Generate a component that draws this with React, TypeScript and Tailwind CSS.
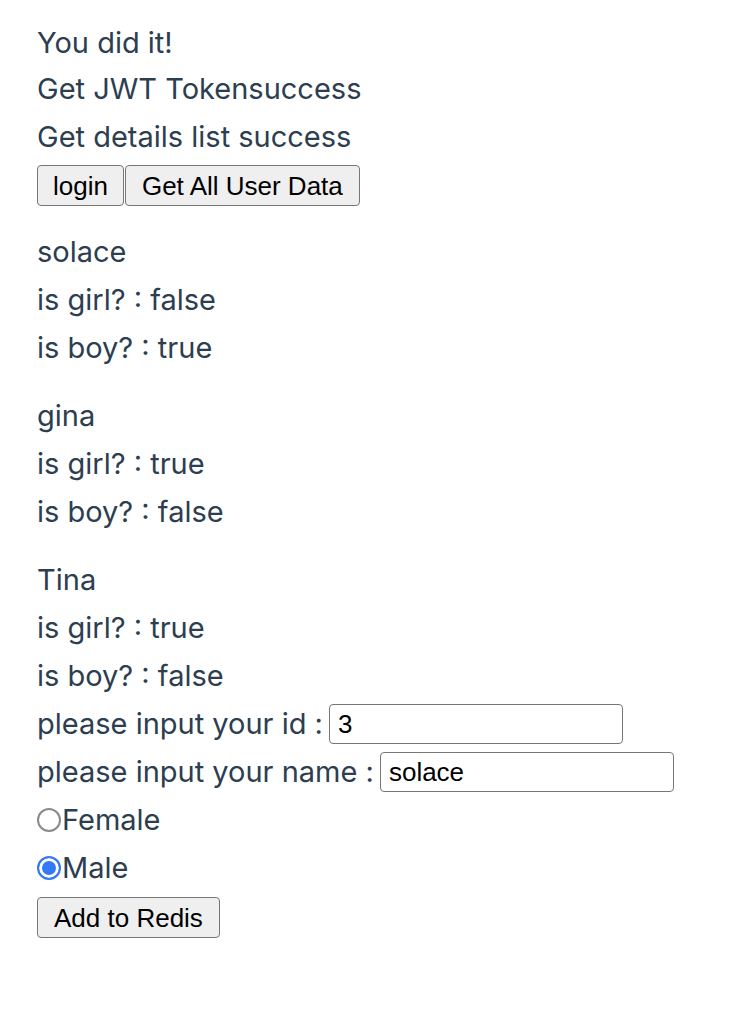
import React from 'react';

type User = { name: string; girl: boolean; boy: boolean };

const users: User[] = [
  { name: 'solace', girl: false, boy: true },
  { name: 'gina', girl: true, boy: false },
  { name: 'Tina', girl: true, boy: false },
];

const line = 'h-[48px] leading-[48px] whitespace-nowrap';
const btn =
  "h-[41px] bg-[#efefef] border border-[#767676] rounded-[4px] text-black text-[26px] leading-none font-['Liberation_Sans',Arial,sans-serif]";
const field =
  "h-[40px] w-[294px] px-[8px] border border-[#767676] rounded-[4px] text-black text-[26px] font-['Liberation_Sans',Arial,sans-serif] bg-white outline-none";

export default function App() {
  const [id, setId] = React.useState('3');
  const [name, setName] = React.useState('solace');
  const [gender, setGender] = React.useState('male');

  return (
    <div className="min-h-screen bg-white pl-[37px] pt-[20px] text-[#2c3e50] text-[29px] font-['Inter','Open_Sans',sans-serif]">
      <p className="h-[45px] leading-[45px]">You did it!</p>
      <p className={line}>Get JWT Tokensuccess</p>
      <p className={line}>Get details list success</p>
      <div className="flex mt-[4px]">
        <button className={btn + ' px-[15px]'}>login</button>
        <button className={btn + ' px-[16px] ml-[1px]'}>Get All User Data</button>
      </div>

      {users.map((u, i) => (
        <div key={u.name} className={i === 0 ? 'mt-[22px]' : 'mt-[20px]'}>
          <p className={line}>{u.name}</p>
          <p className={line}>is girl? : {String(u.girl)}</p>
          <p className={line}>is boy? : {String(u.boy)}</p>
        </div>
      ))}

      <div className={line + ' flex items-center'}>
        <span className="mr-[6px]">please input your id :</span>
        <input className={field} value={id} onChange={(e) => setId(e.target.value)} />
      </div>
      <div className={line + ' flex items-center'}>
        <span className="mr-[6px]">please input your name :</span>
        <input className={field} value={name} onChange={(e) => setName(e.target.value)} />
      </div>

      {[
        { v: 'female', label: 'Female' },
        { v: 'male', label: 'Male' },
      ].map((r) => (
        <label key={r.v} className={line + ' flex items-center'}>
          <input
            type="radio"
            name="gender"
            checked={gender === r.v}
            onChange={() => setGender(r.v)}
            className="appearance-none w-[24px] h-[24px] rounded-full border-2 border-[#8a8a8a] bg-white checked:border-[#3478f6] checked:bg-[#3478f6] checked:shadow-[inset_0_0_0_3px_white] m-0"
          />
          <span className="ml-[1px]">{r.label}</span>
        </label>
      ))}

      <button className={btn + ' px-[16px] mt-[5px]'}>Add to Redis</button>
    </div>
  );
}
